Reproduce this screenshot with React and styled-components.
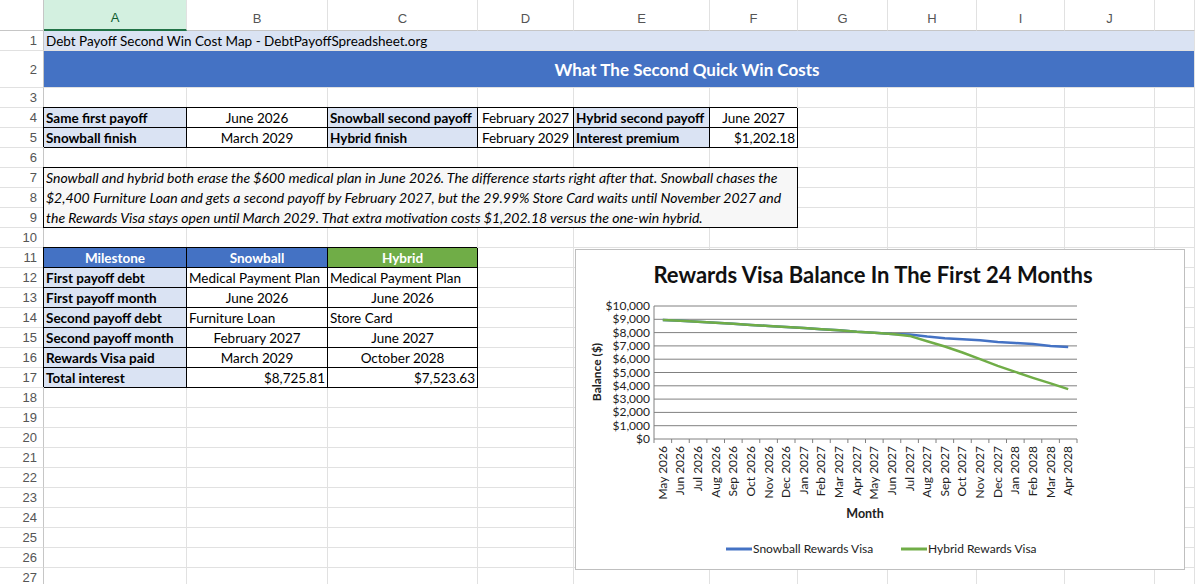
import React from "react";
import styled, { createGlobalStyle } from "styled-components";

const G = createGlobalStyle`
  body{margin:0;background:#fff;font-family:Lato,"Open Sans",sans-serif;overflow:hidden;}
`;
const COLS = [44,143,141,150,96,136,88,90,89,88,90,40];
const ROWS = [31,20,37,...Array(25).fill(20)];
const Sheet = styled.div`
  position:relative;display:grid;
  grid-template-columns:${COLS.map(c=>c+"px").join(" ")};
  grid-template-rows:${ROWS.map(r=>r+"px").join(" ")};
  width:1195px;height:584px;overflow:hidden;font-size:13.5px;color:#000;
`;
const Cell = styled.div`
  grid-column:${p=>p.$c} / span ${p=>p.$cs||1};
  grid-row:${p=>p.$r} / span ${p=>p.$rs||1};
  border-right:1px solid ${p=>p.$b?"#000":"#e1e1e1"};
  border-bottom:1px solid ${p=>p.$b?"#000":"#e1e1e1"};
  ${p=>p.$b?"box-shadow:-1px -1px 0 #000;position:relative;z-index:1;":""}
  background:${p=>p.$bg||"#fff"};
  color:${p=>p.$fg||"#000"};
  font-weight:${p=>p.$bold?700:400};
  display:flex;align-items:center;
  justify-content:${p=>p.$al==="c"?"center":p.$al==="r"?"flex-end":"flex-start"};
  padding:0 2px;white-space:nowrap;overflow:visible;box-sizing:border-box;
`;
const Head = styled.div`
  grid-column:${p=>p.$c};grid-row:1;
  background:${p=>p.$sel?"#d3f0e0":"#fff"};
  border-right:1px solid #e1e1e1;
  border-bottom:${p=>p.$sel?"2px solid #217346":"1px solid #c6c6c6"};
  color:${p=>p.$sel?"#0e5c2f":"#555"};
  display:flex;align-items:flex-end;justify-content:center;padding-bottom:4px;
  font-family:"Liberation Sans",sans-serif;font-size:13px;box-sizing:border-box;
`;
const RowNum = styled.div`
  grid-column:1;grid-row:${p=>p.$r};
  border-right:1px solid #c6c6c6;border-bottom:1px solid #e1e1e1;
  color:#555;font-family:"Liberation Sans",sans-serif;font-size:13px;
  display:flex;align-items:center;justify-content:flex-end;padding-right:6px;box-sizing:border-box;
`;
const Para = styled.div`
  grid-column:2 / span 6;grid-row:8 / span 3;
  border:1px solid #000;margin:-1px 0 0 -1px;background:#f7f7f7;
  font-style:italic;font-size:14px;line-height:20px;padding:0 2px;position:relative;z-index:1;
`;
const Title = styled(Cell)`
  font-size:17px;justify-content:center;padding-left:138px;
`;
const Chart = styled.div`
  position:absolute;left:575px;top:249px;width:610px;height:321px;
  background:#fff;border:1px solid #bfbfbf;box-sizing:border-box;z-index:2;
`;
const LETTERS="ABCDEFGHIJK".split("");

const L = "#dae3f3";
const content = [
  {r:5,c:2,t:"Same first payoff",b:1,bg:L,bold:1},
  {r:5,c:3,t:"June 2026",b:1,al:"c"},
  {r:5,c:4,t:"Snowball second payoff",b:1,bg:L,bold:1},
  {r:5,c:5,t:"February 2027",b:1,al:"c"},
  {r:5,c:6,t:"Hybrid second payoff",b:1,bg:L,bold:1},
  {r:5,c:7,t:"June 2027",b:1,al:"c"},
  {r:6,c:2,t:"Snowball finish",b:1,bg:L,bold:1},
  {r:6,c:3,t:"March 2029",b:1,al:"c"},
  {r:6,c:4,t:"Hybrid finish",b:1,bg:L,bold:1},
  {r:6,c:5,t:"February 2029",b:1,al:"c"},
  {r:6,c:6,t:"Interest premium",b:1,bg:L,bold:1},
  {r:6,c:7,t:"$1,202.18",b:1,al:"r"},
  {r:12,c:2,t:"Milestone",b:1,bg:"#4472c4",fg:"#fff",bold:1,al:"c"},
  {r:12,c:3,t:"Snowball",b:1,bg:"#4472c4",fg:"#fff",bold:1,al:"c"},
  {r:12,c:4,t:"Hybrid",b:1,bg:"#70ad47",fg:"#fff",bold:1,al:"c"},
];
const rowsT = [
  ["First payoff debt","Medical Payment Plan","Medical Payment Plan","l"],
  ["First payoff month","June 2026","June 2026","c"],
  ["Second payoff debt","Furniture Loan","Store Card","l"],
  ["Second payoff month","February 2027","June 2027","c"],
  ["Rewards Visa paid","March 2029","October 2028","c"],
  ["Total interest","$8,725.81","$7,523.63","r"],
];
rowsT.forEach((rw,i)=>{
  content.push({r:13+i,c:2,t:rw[0],b:1,bg:L,bold:1});
  content.push({r:13+i,c:3,t:rw[1],b:1,al:rw[3]});
  content.push({r:13+i,c:4,t:rw[2],b:1,al:rw[3]});
});

const months=["May 2026","Jun 2026","Jul 2026","Aug 2026","Sep 2026","Oct 2026","Nov 2026","Dec 2026","Jan 2027","Feb 2027","Mar 2027","Apr 2027","May 2027","Jun 2027","Jul 2027","Aug 2027","Sep 2027","Oct 2027","Nov 2027","Dec 2027","Jan 2028","Feb 2028","Mar 2028","Apr 2028"];
const snow=[8950,8900,8820,8740,8660,8580,8500,8420,8340,8260,8180,8060,7980,7900,7850,7700,7580,7500,7420,7300,7220,7140,7000,6920];
const hyb=[8950,8900,8820,8740,8660,8580,8500,8420,8340,8260,8180,8060,7980,7900,7750,7350,6950,6500,6000,5500,5050,4600,4180,3750];

function ChartSvg(){
  const x0=78,x1=501,y0=56,y1=189,st=(x1-x0)/24;
  const X=i=>x0+st*(i+0.5), Y=v=>y1-(v/10000)*(y1-y0);
  const pts=a=>a.map((v,i)=>`${X(i)},${Y(v)}`).join(" ");
  const f={fontFamily:"Lato,'Open Sans',sans-serif"};
  return (
    <svg width="608" height="319" style={f}>
      <text x="297" y="33" textAnchor="middle" fontSize="22" fontWeight="700" fill="#111">Rewards Visa Balance In The First 24 Months</text>
      {Array.from({length:11},(_,k)=>{const y=Y(k*1000);return(
        <g key={k}>
          <line x1={x0} x2={x1} y1={y} y2={y} stroke="#808080" strokeWidth="1"/>
          <text x={x0-4} y={y+4} textAnchor="end" fontSize="12" fill="#222">${k===0?"0":(k*1000).toLocaleString("en-US")}</text>
        </g>)})}
      <line x1={x0} x2={x0} y1={y0} y2={y1} stroke="#808080"/>
      {Array.from({length:25},(_,i)=><line key={i} x1={x0+st*i} x2={x0+st*i} y1={y1} y2={y1+4} stroke="#808080"/>)}
      {months.map((m,i)=><text key={m} transform={`translate(${X(i)+4},${y1+7}) rotate(-90)`} textAnchor="end" fontSize="12" fill="#222">{m}</text>)}
      <text transform="translate(25,122) rotate(-90)" textAnchor="middle" fontSize="12" fontWeight="700" fill="#222">Balance ($)</text>
      <text x="289" y="268" textAnchor="middle" fontSize="12.5" fontWeight="700" fill="#222">Month</text>
      <polyline points={pts(snow)} fill="none" stroke="#4472c4" strokeWidth="2.5"/>
      <polyline points={pts(hyb)} fill="none" stroke="#70ad47" strokeWidth="2.5"/>
      <line x1="150" x2="176" y1="299" y2="299" stroke="#4472c4" strokeWidth="3"/>
      <text x="177" y="303" fontSize="12" fill="#222">Snowball Rewards Visa</text>
      <line x1="325" x2="351" y1="299" y2="299" stroke="#70ad47" strokeWidth="3"/>
      <text x="352" y="303" fontSize="12" fill="#222">Hybrid Rewards Visa</text>
    </svg>
  );
}

export default function App(){
  const used=new Set();
  content.forEach(c=>used.add(c.r+"-"+c.c));
  for(let c=2;c<=7;c++)for(let r=8;r<=10;r++)used.add(r+"-"+c);
  for(let c=2;c<=12;c++){used.add("2-"+c);used.add("3-"+c);}
  const empties=[];
  for(let r=4;r<=28;r++)for(let c=2;c<=12;c++)if(!used.has(r+"-"+c))empties.push(<Cell key={r+"-"+c} $r={r} $c={c}/>);
  return (
    <>
      <G/>
      <Sheet>
        <Head $c={1} style={{borderRight:"1px solid #c6c6c6"}}/>
        {LETTERS.map((l,i)=><Head key={l} $c={i+2} $sel={i===0}>{l}</Head>)}
        <Head $c={12}/>
        {Array.from({length:27},(_,i)=><RowNum key={i} $r={i+2}>{i+1}</RowNum>)}
        <Cell $r={2} $c={2} $cs={11} $bg="#dae3f3">Debt Payoff Second Win Cost Map - DebtPayoffSpreadsheet.org</Cell>
        <Title $r={3} $c={2} $cs={11} $bg="#4472c4" $fg="#fff" $bold>What The Second Quick Win Costs</Title>
        {empties}
        {content.map(c=><Cell key={c.r+"-"+c.c} $r={c.r} $c={c.c} $b={c.b} $bg={c.bg} $fg={c.fg} $bold={c.bold} $al={c.al}>{c.t}</Cell>)}
        <Para>
          Snowball and hybrid both erase the $600 medical plan in June 2026. The difference starts right after that. Snowball chases the $2,400 Furniture Loan and gets a second payoff by February 2027, but the 29.99% Store Card waits until November 2027 and the Rewards Visa stays open until March 2029. That extra motivation costs $1,202.18 versus the one-win hybrid.
        </Para>
        <Chart><ChartSvg/></Chart>
      </Sheet>
    </>
  );
}
